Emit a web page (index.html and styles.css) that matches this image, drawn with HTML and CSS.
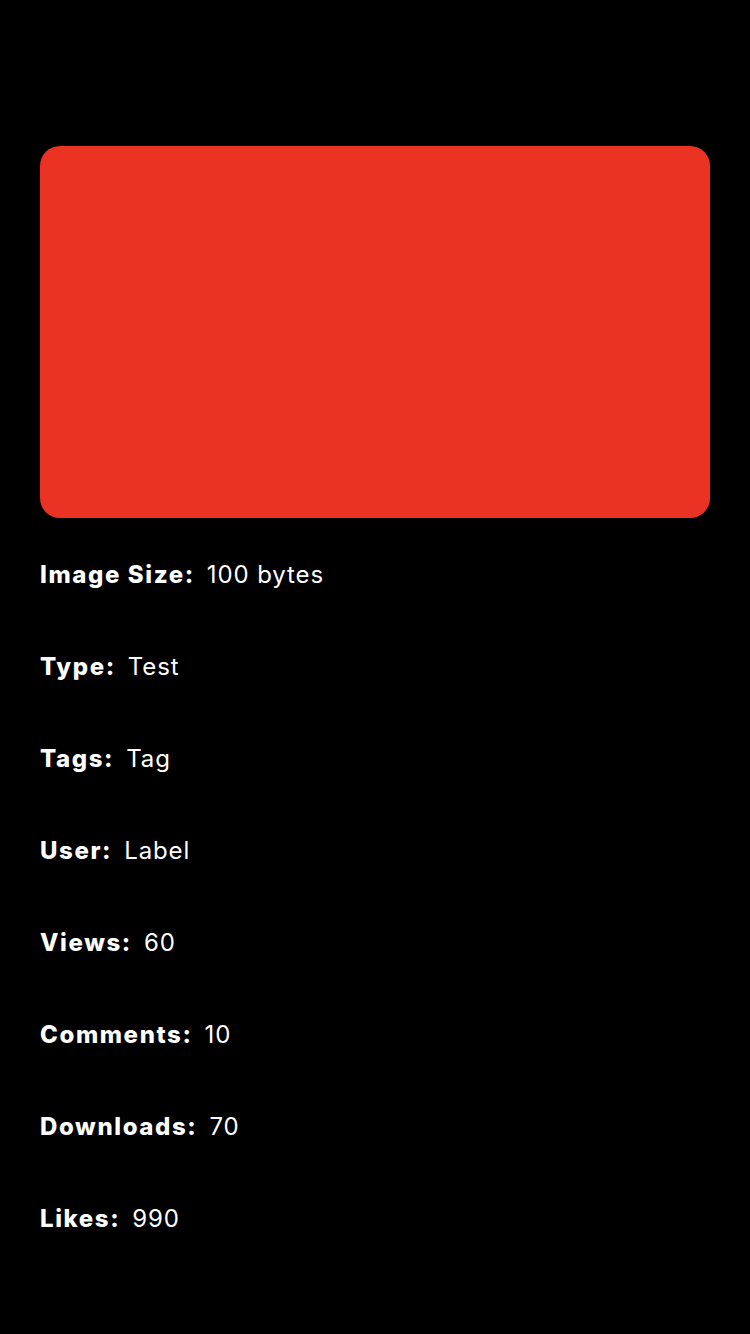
FILE: index.html
```html
<!DOCTYPE html>
<html>
<head>
<meta charset="utf-8">
<link rel="stylesheet" href="styles.css">
</head>
<body>
<div class="page">
  <div class="image"></div>
  <div class="rows">
    <div class="row"><span class="label">Image Size:</span><span class="value">100 bytes</span></div>
    <div class="row"><span class="label">Type:</span><span class="value">Test</span></div>
    <div class="row"><span class="label">Tags:</span><span class="value">Tag</span></div>
    <div class="row"><span class="label">User:</span><span class="value">Label</span></div>
    <div class="row"><span class="label">Views:</span><span class="value">60</span></div>
    <div class="row"><span class="label">Comments:</span><span class="value">10</span></div>
    <div class="row"><span class="label">Downloads:</span><span class="value">70</span></div>
    <div class="row"><span class="label">Likes:</span><span class="value">990</span></div>
  </div>
</div>
</body>
</html>
```
FILE: styles.css
```css
html, body {
  margin: 0;
  padding: 0;
  background: #000;
  width: 750px;
  height: 1334px;
  overflow: hidden;
}
.page {
  padding: 146px 40px 0 40px;
  font-family: Inter, "Noto Sans", sans-serif;
  color: #fff;
}
.image {
  height: 372px;
  background: #EA3323;
  border-radius: 20px;
}
.rows {
  margin-top: 10px;
}
.row {
  height: 92px;
  display: flex;
  align-items: center;
  gap: 12px;
  font-size: 24px;
}
.label {
  font-weight: 800;
  letter-spacing: 1.6px;
}
.value {
  font-weight: 400;
  letter-spacing: 0.9px;
}
```
